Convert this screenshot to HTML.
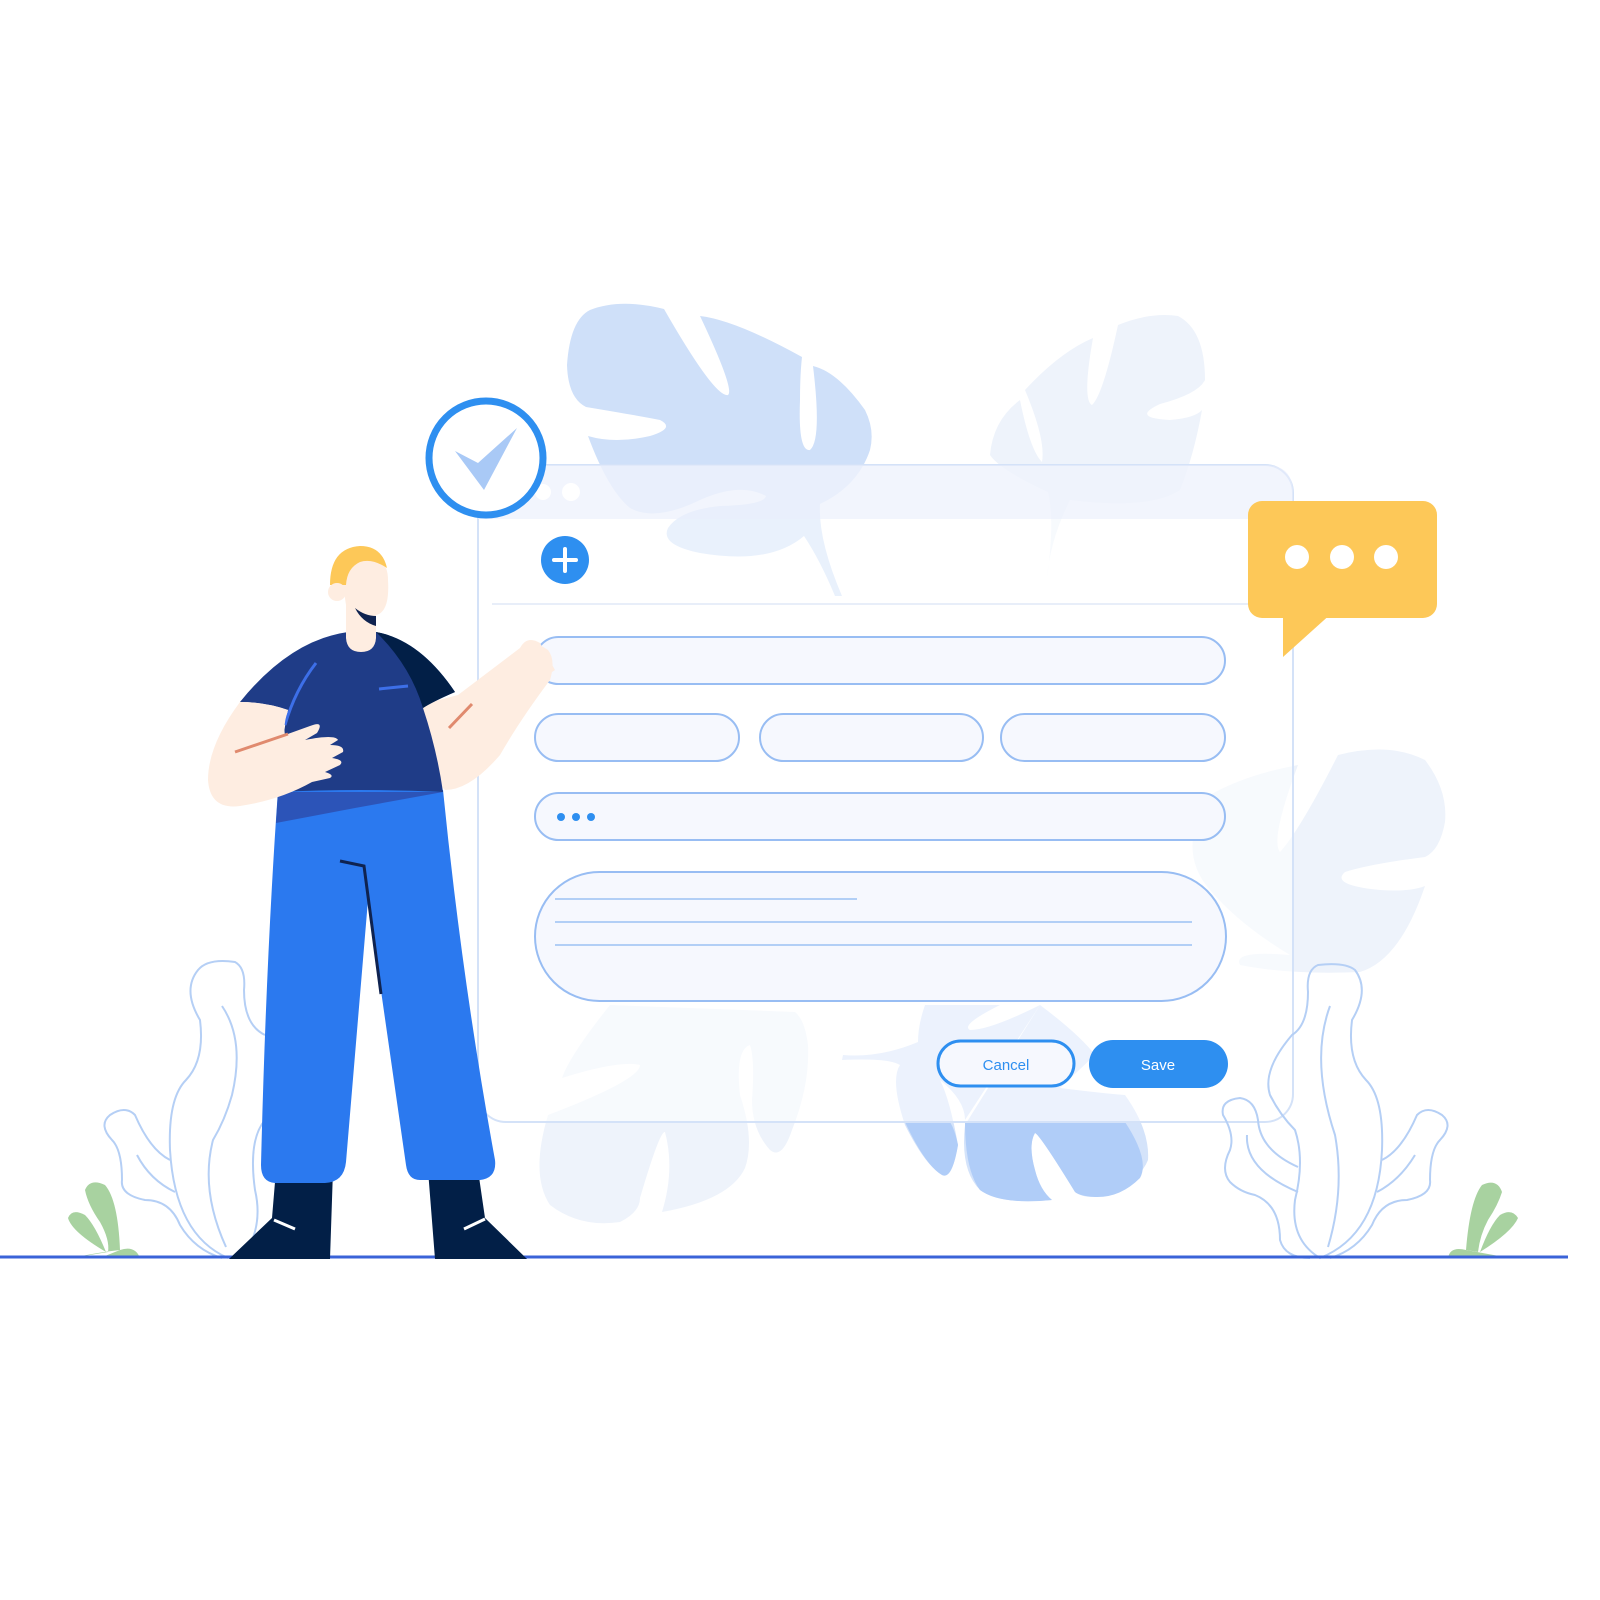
<!DOCTYPE html>
<html><head><meta charset="utf-8"><style>html,body{margin:0;padding:0;background:#fff;width:1600px;height:1600px;overflow:hidden}</style></head>
<body>
<svg width="1600" height="1600" viewBox="0 0 1600 1600" xmlns="http://www.w3.org/2000/svg">
<!-- background leaves -->
<g fill="#cfe0f9">
<path d="M664 309 Q620 298 590 310 Q570 320 567 365 Q568 398 586 407 Q640 416 660 420 Q676 428 650 436 Q615 444 588 436 Q608 490 630 508 Q655 522 700 500 Q740 482 766 496 Q764 505 720 506 Q680 510 668 528 Q660 545 700 553 Q770 565 804 536 Q820 560 835 596 L842 596 Q818 540 820 504 Q858 486 870 450 Q875 430 865 410 Q838 372 813 366 Q822 440 810 450 Q798 452 800 400 Q800 375 802 357 Q735 320 700 316 Q735 390 728 395 Q715 398 664 309Z"/>
</g>
<g fill="#eef3fb">
<path d="M1118 325 Q1150 312 1178 316 Q1205 330 1205 380 Q1198 394 1160 404 Q1130 418 1170 420 Q1195 418 1202 410 Q1194 455 1180 490 Q1150 510 1070 500 Q1050 540 1047 578 Q1055 520 1048 492 Q1000 470 990 455 Q993 420 1020 400 Q1030 450 1042 462 Q1046 440 1025 390 Q1060 352 1093 338 Q1082 400 1092 405 Q1103 395 1118 325Z"/>
<path d="M1338 755 Q1390 742 1425 760 Q1448 790 1445 822 Q1440 850 1425 857 Q1370 864 1345 872 Q1330 885 1380 890 Q1410 892 1425 886 Q1400 960 1360 972 Q1290 975 1240 965 Q1232 950 1290 955 Q1240 925 1210 890 Q1175 850 1210 795 Q1245 775 1298 765 Q1270 840 1280 852 Q1300 830 1338 755Z"/>
<path d="M610 1005 Q570 1055 562 1078 Q620 1060 640 1065 Q640 1080 548 1115 Q530 1175 550 1205 Q580 1228 620 1222 Q640 1212 640 1198 Q660 1130 665 1132 Q675 1170 662 1212 Q730 1200 745 1168 Q755 1140 740 1095 Q735 1050 750 1045 Q755 1060 752 1100 Q752 1130 770 1150 Q782 1160 792 1130 Q810 1085 808 1045 Q805 1020 795 1012 Z"/>
</g>
<g fill="#d4e3fa">
<path d="M925 1005 Q918 1025 918 1042 Q880 1058 843 1055 L842 1060 Q890 1058 900 1065 Q890 1080 905 1125 Q925 1165 942 1175 Q952 1180 958 1145 Q950 1100 940 1080 Q965 1100 965 1120 L1040 1005 Q990 1030 970 1030 Q960 1025 1000 1005Z"/>
<path d="M1040 1005 Q1080 1035 1095 1055 L1060 1088 Q1100 1093 1125 1095 Q1150 1130 1148 1160 Q1140 1180 1110 1195 Q1085 1200 1075 1192 Q1040 1135 1035 1133 Q1028 1145 1035 1170 Q1040 1190 1052 1200 Q1000 1205 980 1190 Q960 1170 965 1125 Z"/>
</g>
<g fill="#b0cdf8">
<path d="M1125 1122 Q1150 1160 1140 1178 Q1120 1198 1095 1197 Q1080 1196 1075 1192 Q1040 1135 1035 1133 Q1028 1145 1035 1170 Q1040 1190 1052 1200 Q1000 1205 980 1190 Q965 1170 965 1122Z"/>
<path d="M905 1122 Q925 1165 942 1175 Q952 1180 958 1145 Q955 1130 950 1122Z"/>
</g>
<!-- window -->
<rect x="478" y="465" width="815" height="657" rx="28" fill="#ffffff" fill-opacity="0.55" stroke="#d4e2f8" stroke-width="2"/>
<path d="M506 465 H1265 Q1293 465 1293 493 V519 H478 V493 Q478 465 506 465Z" fill="#e9eefc" fill-opacity="0.6"/>
<circle cx="543" cy="492" r="8" fill="#fff"/><circle cx="571" cy="492" r="9" fill="#fff"/>
<line x1="492" y1="604" x2="1280" y2="604" stroke="#e8eef9" stroke-width="2"/>
<circle cx="565" cy="560" r="24" fill="#2e8ff0"/>
<path d="M554 560 H576 M565 549 V571" stroke="#fff" stroke-width="4" stroke-linecap="round"/>
<!-- fields -->
<g fill="#f6f8fe" stroke="#98bdf3" stroke-width="2">
<rect x="535" y="637" width="690" height="47" rx="23.5"/>
<rect x="535" y="714" width="204" height="47" rx="23.5"/>
<rect x="760" y="714" width="223" height="47" rx="23.5"/>
<rect x="1001" y="714" width="224" height="47" rx="23.5"/>
<rect x="535" y="793" width="690" height="47" rx="23.5"/>
<rect x="535" y="872" width="691" height="129" rx="64.5"/>
</g>
<circle cx="561" cy="817" r="4" fill="#2e8ff0"/><circle cx="576" cy="817" r="4" fill="#2e8ff0"/><circle cx="591" cy="817" r="4" fill="#2e8ff0"/>
<g stroke="#6fa6ee" stroke-width="1"><line x1="555" y1="899" x2="857" y2="899"/><line x1="555" y1="922" x2="1192" y2="922"/><line x1="555" y1="945" x2="1192" y2="945"/></g>
<rect x="938" y="1041" width="136" height="45" rx="22.5" fill="#f6f8fe" stroke="#2e8ff0" stroke-width="3"/>
<text x="1006" y="1070" font-family="Liberation Sans, sans-serif" font-size="15" fill="#2e8ff0" text-anchor="middle">Cancel</text>
<rect x="1089" y="1040" width="139" height="48" rx="24" fill="#2e8ff0"/>
<text x="1158" y="1070" font-family="Liberation Sans, sans-serif" font-size="15" fill="#fff" text-anchor="middle">Save</text>
<!-- check circle -->
<circle cx="486" cy="458" r="57" fill="#fff" stroke="#2e8ff0" stroke-width="7"/>
<path d="M455 451 L478 463 L517 428 L484 490Z" fill="#a9c9f6"/>
<!-- speech bubble -->
<rect x="1248" y="501" width="189" height="117" rx="14" fill="#fdc858"/>
<path d="M1283 612 V657 L1333 612Z" fill="#fdc858"/>
<circle cx="1297" cy="557" r="12" fill="#fff"/><circle cx="1342" cy="557" r="12" fill="#fff"/><circle cx="1386" cy="557" r="12" fill="#fff"/>
<!-- outline plants left -->
<g fill="none" stroke="#b5cff5" stroke-width="2">
<path d="M228 1258 Q175 1235 170 1150 Q168 1098 186 1080 Q205 1060 200 1020 Q182 990 198 970 Q208 958 235 962 Q246 968 244 990 Q244 1025 265 1035"/>
<path d="M222 1006 Q245 1040 232 1095 Q225 1120 213 1140 Q200 1190 226 1247"/>
<path d="M222 1258 Q195 1250 180 1225 Q170 1200 145 1200 Q120 1195 122 1180 Q122 1150 112 1140 Q98 1125 110 1115 Q125 1105 135 1115 Q150 1150 170 1160"/>
<path d="M137 1155 Q150 1180 175 1192"/>
<path d="M265 1120 Q248 1140 255 1190 Q262 1220 250 1245"/>
</g>
<!-- outline plants right -->
<g fill="none" stroke="#b5cff5" stroke-width="2">
<path d="M1320 1258 Q1378 1235 1382 1150 Q1384 1098 1366 1080 Q1347 1060 1352 1020 Q1370 990 1355 970 Q1345 962 1318 965 Q1306 970 1308 992 Q1308 1025 1292 1035 Q1262 1070 1270 1095 Q1280 1115 1295 1130 Q1305 1160 1295 1200 Q1290 1240 1320 1258Z"/>
<path d="M1330 1006 Q1310 1060 1335 1135 Q1345 1190 1328 1247"/>
<path d="M1330 1258 Q1357 1250 1372 1225 Q1382 1200 1407 1200 Q1432 1195 1430 1180 Q1430 1150 1440 1140 Q1454 1125 1442 1115 Q1427 1105 1417 1115 Q1402 1150 1382 1160"/>
<path d="M1415 1155 Q1400 1180 1377 1192"/>
<path d="M1298 1167 Q1260 1150 1258 1120 Q1255 1100 1240 1098 Q1220 1100 1223 1115 Q1235 1135 1230 1150 Q1220 1170 1230 1182 Q1240 1192 1255 1195 Q1280 1205 1280 1240 Q1285 1258 1310 1258"/>
<path d="M1247 1135 Q1245 1170 1298 1192"/>
</g>
<!-- green sprouts -->
<g fill="#a8d2a0">
<path d="M72 1258 Q100 1252 120 1250 Q118 1200 105 1185 Q90 1178 85 1190 Q88 1205 100 1222 Q110 1240 108 1252Z"/>
<path d="M106 1252 Q95 1225 85 1215 Q72 1208 68 1218 Q72 1232 106 1252Z"/>
<path d="M120 1250 Q135 1245 140 1258 L100 1258Z"/>
<path d="M1466 1250 Q1470 1200 1482 1185 Q1497 1178 1502 1192 Q1498 1205 1488 1220 Q1480 1235 1478 1252Z"/>
<path d="M1480 1252 Q1490 1225 1500 1215 Q1512 1208 1518 1218 Q1512 1232 1480 1252Z"/>
<path d="M1448 1258 Q1450 1246 1466 1250 L1510 1258Z"/>
</g>
<!-- ground -->
<line x1="0" y1="1257" x2="1568" y2="1257" stroke="#3a63d8" stroke-width="3"/>
<!-- person -->
<g>
<!-- shoes -->
<path d="M276 1170 L272 1218 L229 1259 L330 1259 L333 1170Z" fill="#021f47"/>
<path d="M428 1170 L435 1259 L527 1259 L485 1218 L478 1170Z" fill="#021f47"/>
<line x1="274" y1="1220" x2="295" y2="1229" stroke="#fff" stroke-width="3"/>
<line x1="464" y1="1229" x2="485" y2="1219" stroke="#fff" stroke-width="3"/>
<!-- pants -->
<path d="M278 790 L443 790 Q462 980 495 1160 Q497 1178 480 1180 L420 1180 Q408 1180 406 1165 L368 900 L346 1162 Q344 1182 325 1183 L275 1183 Q261 1182 261 1165 Q266 960 278 790Z" fill="#2b79ef"/>
<path d="M278 792 L443 792 L355 808 L276 823Z" fill="#2c54b8"/>
<path d="M340 861 L364 866 L381 994" stroke="#0f2350" stroke-width="3" fill="none"/>
<!-- right arm -->
<path d="M420 705 L458 695 L520 648 Q535 640 548 650 Q556 660 550 680 Q520 720 500 755 Q470 790 445 790 L435 780Z" fill="#feede1"/>
<path d="M520 648 Q527 635 540 643 L555 670 L540 680Z" fill="#feede1"/>
<!-- torso -->
<path d="M240 702 Q290 640 348 632 L376 632 Q420 640 455 692 Q432 702 423 708 Q437 750 443 792 Q360 788 278 792 Q280 750 288 710 Q265 702 240 702Z" fill="#1f3c87"/>
<path d="M376 632 Q420 640 455 692 Q432 702 423 708 Q410 665 376 632Z" fill="#021f47"/>
<path d="M316 663 Q295 690 285 725" stroke="#3d6fe8" stroke-width="3" fill="none"/>
<line x1="379" y1="689" x2="408" y2="686" stroke="#3d6fe8" stroke-width="3"/>
<line x1="449" y1="728" x2="472" y2="704" stroke="#e08a6e" stroke-width="3"/>
<!-- left arm -->
<path d="M240 702 Q265 702 288 710 Q283 725 285 735 L310 726 Q325 720 317 733 L305 740 Q335 734 338 740 L330 745 Q345 745 343 752 L332 758 Q345 760 340 765 L325 772 Q335 775 330 778 L312 782 Q280 800 240 806 Q210 810 208 780 Q208 745 240 702Z" fill="#feede1"/>
<line x1="235" y1="752" x2="288" y2="734" stroke="#e08a6e" stroke-width="3"/>
<!-- neck/head -->
<path d="M346 600 L376 600 L376 638 Q375 652 361 652 Q347 652 346 638Z" fill="#feede1"/>
<path d="M343 585 Q340 558 362 555 Q388 555 388 580 Q390 612 376 615 Q360 614 346 605Z" fill="#feede1"/>
<path d="M330 585 Q330 548 360 546 Q382 546 387 568 Q372 558 360 562 Q347 568 346 585Z" fill="#fdc858"/>
<circle cx="337" cy="592" r="9" fill="#feede1"/>
<path d="M355 608 Q365 616 376 616 L376 626 Q362 622 355 608Z" fill="#0f2350"/>
</g>
</svg>
</body></html>
